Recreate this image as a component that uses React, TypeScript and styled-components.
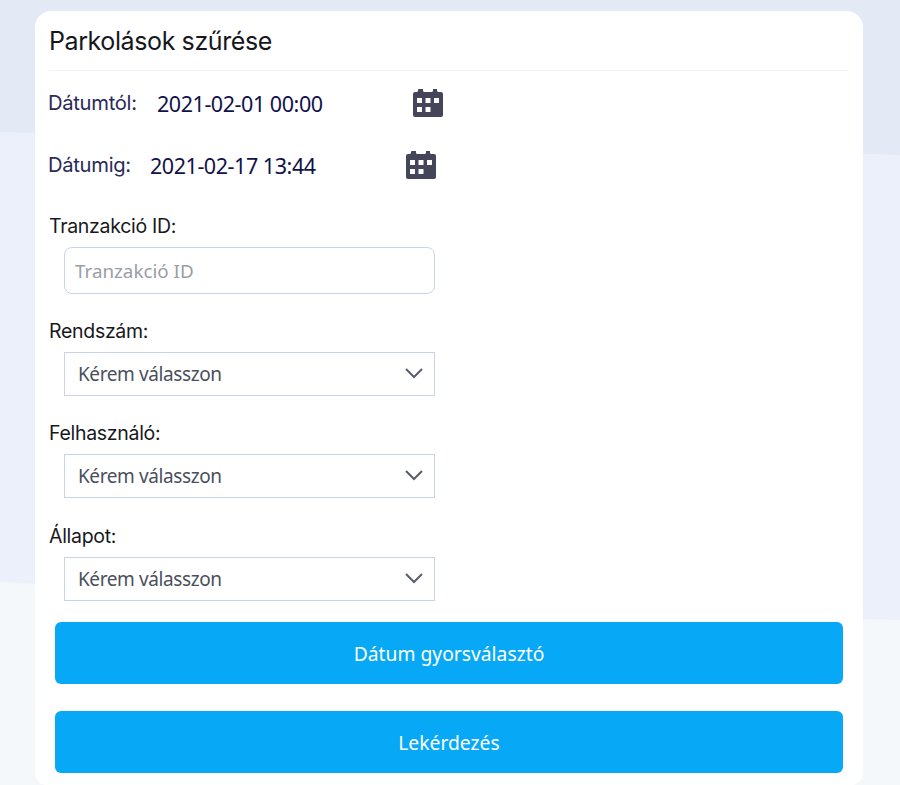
import { FC } from 'react';
import styled, { createGlobalStyle } from 'styled-components';

const GlobalStyle = createGlobalStyle`
  html, body {
    margin: 0;
    padding: 0;
    height: 785px;
    overflow: hidden;
  }
  * {
    box-sizing: border-box;
  }
`;

const Page = styled.div`
  position: relative;
  width: 900px;
  height: 785px;
  overflow: hidden;
  background: #e3eaf6;
  padding: 11px 37px 0 35px;
`;

const Backdrop = styled.svg`
  position: absolute;
  inset: 0;
  width: 900px;
  height: 785px;
`;

const Card = styled.div`
  position: relative;
  height: 774px;
  padding: 0 15px 0 14px;
  background: #fff;
  border-radius: 16px 16px 12px 12px;
  font-family: 'Inter', 'Liberation Sans', sans-serif;
`;

const Title = styled.h2`
  margin: 0;
  height: 60px;
  padding-top: 14px;
  border-bottom: 1px solid #f0f1f4;
  font-family: 'Inter', 'Liberation Sans', sans-serif;
  font-size: 25px;
  line-height: 32px;
  font-weight: 400;
  letter-spacing: -0.4px;
  color: #16171c;
`;

const DateRow = styled.div<{ $top: number; $labelWidth: number }>`
  display: grid;
  grid-template-columns: ${(p) => p.$labelWidth}px 256px 30px;
  align-items: center;
  height: 34px;
  margin-top: ${(p) => p.$top}px;
`;

const DateLabel = styled.span`
  font-size: 20.2px;
  letter-spacing: -0.3px;
  color: #2a2a5a;
  margin-top: -4px;
  margin-left: -1px;
`;

const DateValue = styled.span`
  font-family: 'Noto Sans', 'Liberation Sans', sans-serif;
  font-size: 21.5px;
  letter-spacing: -0.45px;
  color: #12124a;
  margin-top: -2px;
`;

const CalendarIcon = styled.svg`
  width: 30px;
  height: 30px;
  display: block;
  margin-top: -2px;
`;

const Field = styled.div<{ $top: number }>`
  margin-top: ${(p) => p.$top}px;
`;

const Label = styled.label`
  display: block;
  height: 33px;
  font-size: 19.5px;
  line-height: 24px;
  letter-spacing: -0.3px;
  color: #17181c;
`;

const TextInput = styled.div`
  display: flex;
  align-items: center;
  width: 371px;
  height: 47px;
  margin-left: 15px;
  padding-left: 10px;
  border: 1px solid #c9d5e6;
  border-radius: 8px;
  font-family: 'Noto Sans', sans-serif;
  font-size: 18.8px;
  color: #9a9ea6;
`;

const SelectBox = styled.div`
  display: flex;
  align-items: center;
  justify-content: space-between;
  width: 371px;
  height: 44px;
  margin-left: 15px;
  padding: 0 10px 0 13px;
  border: 1px solid #c9d5e6;
  font-family: 'Noto Sans', sans-serif;
  font-size: 19px;
  letter-spacing: -0.4px;
  color: #4a4f5c;
`;

const Chevron = styled.svg`
  width: 20px;
  height: 12px;
  margin-top: -3px;
`;

const Buttons = styled.div`
  display: flex;
  flex-direction: column;
  gap: 27px;
  margin-top: 21px;
  padding-left: 6px;
`;

const ActionButton = styled.button`
  width: 788px;
  height: 62px;
  border: 0;
  border-radius: 6px;
  background: #07a9f6;
  font-family: 'Noto Sans', sans-serif;
  font-size: 19.3px;
  color: #fff;
`;

const Calendar: FC = () => (
  <CalendarIcon viewBox="0 0 30 30">
    <path
      fill="#45455a"
      fillRule="evenodd"
      d="M6 1h4v1.500c0 .8.4 1.200 1 1.500h8c.6-.3 1-.7 1-1.500V1h4v1.500c0 .8.4 1.200 1 1.500h3a2 2 0 0 1 2 2v21a2 2 0 0 1-2 2H2a2 2 0 0 1-2-2V6a2 2 0 0 1 2-2h2c.6-.3 1-.7 1-1.500V1.500ZM4 10v5h5v-5H4Zm8.500 0v5h5v-5h-5Zm8.500 0v5h5v-5h-5ZM4 19v5h5v-5H4Zm8.500 0v5h5v-5h-5Z"
    />
  </CalendarIcon>
);

const Select: FC<{ label: string; top: number }> = ({ label, top }) => (
  <Field $top={top}>
    <Label>{label}</Label>
    <SelectBox>
      Kérem válasszon
      <Chevron viewBox="0 0 20 12">
        <path d="M2 2l8 8 8-8" fill="none" stroke="#5a5e68" strokeWidth="2" />
      </Chevron>
    </SelectBox>
  </Field>
);

const App: FC = () => {
  return (
    <>
      <GlobalStyle />
      <Page>
        <Backdrop viewBox="0 0 900 785">
          <path d="M0 132C300 136 600 146 900 155V785H0Z" fill="#ebf0fa" />
          <path d="M0 582C300 600 600 612 900 620V785H0Z" fill="#f4f8fb" />
        </Backdrop>
        <Card>
          <Title>Parkolások szűrése</Title>
          <DateRow $top={16} $labelWidth={108}>
            <DateLabel>Dátumtól:</DateLabel>
            <DateValue>2021-02-01 00:00</DateValue>
            <Calendar />
          </DateRow>
          <DateRow $top={28} $labelWidth={101}>
            <DateLabel>Dátumig:</DateLabel>
            <DateValue>2021-02-17 13:44</DateValue>
            <Calendar />
          </DateRow>
          <Field $top={31}>
            <Label>Tranzakció ID:</Label>
            <TextInput>Tranzakció ID</TextInput>
          </Field>
          <Select label="Rendszám:" top={25} />
          <Select label="Felhasználó:" top={25} />
          <Select label="Állapot:" top={26} />
          <Buttons>
            <ActionButton>Dátum gyorsválasztó</ActionButton>
            <ActionButton>Lekérdezés</ActionButton>
          </Buttons>
        </Card>
      </Page>
    </>
  );
};

export default App;
